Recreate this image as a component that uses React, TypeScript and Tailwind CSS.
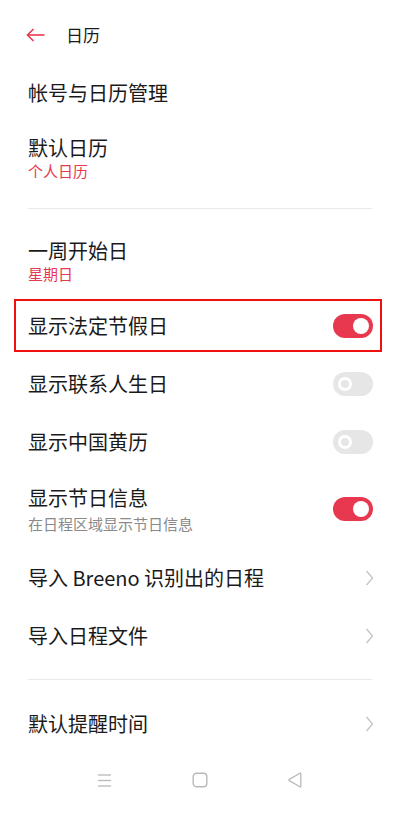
import React from "react";

const RED = "#e8384f";

function Toggle({ on }: { on: boolean }) {
  if (on) {
    return (
      <div className="w-[40px] h-[24px] rounded-full bg-[#e8384f] flex items-center justify-end pr-[4px] shrink-0">
        <div className="w-[16px] h-[16px] rounded-full bg-white" />
      </div>
    );
  }
  return (
    <div className="w-[40px] h-[24px] rounded-full bg-[#e6e6e6] flex items-center pl-[5px] shrink-0">
      <div className="w-[14px] h-[14px] rounded-full border-[3.5px] border-white bg-[#e6e6e6]" />
    </div>
  );
}

function Chevron() {
  return (
    <svg width="9" height="16" viewBox="0 0 9 16" className="shrink-0 mr-[-1px]">
      <polyline points="1.5,1 7.5,8 1.5,15" fill="none" stroke="#c6c6c6" strokeWidth="1.4" />
    </svg>
  );
}

export default function App() {
  return (
    <div
      className="w-[400px] min-h-[827px] bg-white text-[#1a1a1a] flex flex-col"
      style={{ fontFamily: '"Noto Sans CJK SC", "Noto Sans", sans-serif' }}
    >
      {/* Header */}
      <div className="h-[70px] flex items-center pl-[26px]">
        <svg width="19" height="14" viewBox="0 0 19 14">
          <line x1="1.5" y1="7" x2="18.5" y2="7" stroke={RED} strokeWidth="1.6" />
          <polyline points="7.5,1 1.5,7 7.5,13" fill="none" stroke={RED} strokeWidth="1.6" />
        </svg>
        <span className="ml-[21px] text-[17px] leading-[24px]">日历</span>
      </div>

      {/* Account */}
      <div className="h-[46px] flex items-center px-[28px]">
        <span className="text-[20px] leading-[26px]">帐号与日历管理</span>
      </div>

      {/* Default calendar */}
      <div className="h-[92px] pt-[19px] px-[28px] flex flex-col">
        <span className="text-[20px] leading-[26px]">默认日历</span>
        <span className="text-[15px] leading-[20px] text-[#e8384f]">个人日历</span>
      </div>
      <div className="mx-[28px] h-px bg-[#e9e9e9]" />

      {/* Week start */}
      <div className="h-[88px] pt-[29px] px-[28px] flex flex-col">
        <span className="text-[20px] leading-[26px]">一周开始日</span>
        <span className="text-[15px] leading-[20px] text-[#e8384f]">星期日</span>
      </div>

      {/* Highlighted row */}
      <div className="relative h-[58px] flex items-center justify-between px-[28px] pr-[27px]">
        <span className="text-[20px] leading-[26px]">显示法定节假日</span>
        <Toggle on />
        <div className="absolute left-[14px] right-[18px] top-[2px] bottom-[3px] border-[2px] border-[#f01010] pointer-events-none" />
      </div>

      <div className="h-[58px] flex items-center justify-between px-[28px] pr-[27px]">
        <span className="text-[20px] leading-[26px]">显示联系人生日</span>
        <Toggle on={false} />
      </div>

      <div className="h-[57px] flex items-center justify-between px-[28px] pr-[27px]">
        <span className="text-[20px] leading-[26px]">显示中国黄历</span>
        <Toggle on={false} />
      </div>

      <div className="h-[78px] flex items-center justify-between px-[28px] pr-[27px]">
        <div className="flex flex-col pt-[1px]">
          <span className="text-[20px] leading-[26px]">显示节日信息</span>
          <span className="mt-[3px] text-[15px] leading-[20px] text-[#8a8a8a]">在日程区域显示节日信息</span>
        </div>
        <Toggle on />
      </div>

      <div className="h-[59px] flex items-center justify-between px-[28px] pr-[27px]">
        <span className="text-[20px] leading-[26px]">导入 Breeno 识别出的日程</span>
        <Chevron />
      </div>

      <div className="h-[58px] flex items-center justify-between px-[28px] pr-[27px]">
        <span className="text-[20px] leading-[26px]">导入日程文件</span>
        <Chevron />
      </div>

      <div className="pt-[14px]">
        <div className="mx-[28px] h-px bg-[#e9e9e9]" />
      </div>

      <div className="mt-[15px] h-[58px] flex items-center justify-between px-[28px] pr-[27px]">
        <span className="text-[20px] leading-[26px]">默认提醒时间</span>
        <Chevron />
      </div>

      {/* Nav bar */}
      <div className="h-[54px] flex items-center">
        <div className="ml-[97px]">
          <svg width="15" height="15" viewBox="0 0 15 15">
            <line x1="1" y1="2" x2="14" y2="2" stroke="#b9b9b9" strokeWidth="1.3" />
            <line x1="1" y1="7.5" x2="14" y2="7.5" stroke="#b9b9b9" strokeWidth="1.3" />
            <line x1="1" y1="13" x2="14" y2="13" stroke="#b9b9b9" strokeWidth="1.3" />
          </svg>
        </div>
        <div className="ml-[80px]">
          <svg width="16" height="16" viewBox="0 0 16 16">
            <rect x="1.2" y="1.2" width="13.6" height="13.6" rx="3.2" fill="none" stroke="#b9b9b9" strokeWidth="1.4" />
          </svg>
        </div>
        <div className="ml-[79px]">
          <svg width="16" height="16" viewBox="0 0 16 16">
            <path d="M13.8 1.6 L13.8 14.4 Q13.8 15.2 13 14.8 L2.2 8.6 Q1.4 8 2.2 7.4 L13 1.2 Q13.8 0.8 13.8 1.6 Z" fill="none" stroke="#b9b9b9" strokeWidth="1.3" strokeLinejoin="round" />
          </svg>
        </div>
      </div>
    </div>
  );
}
